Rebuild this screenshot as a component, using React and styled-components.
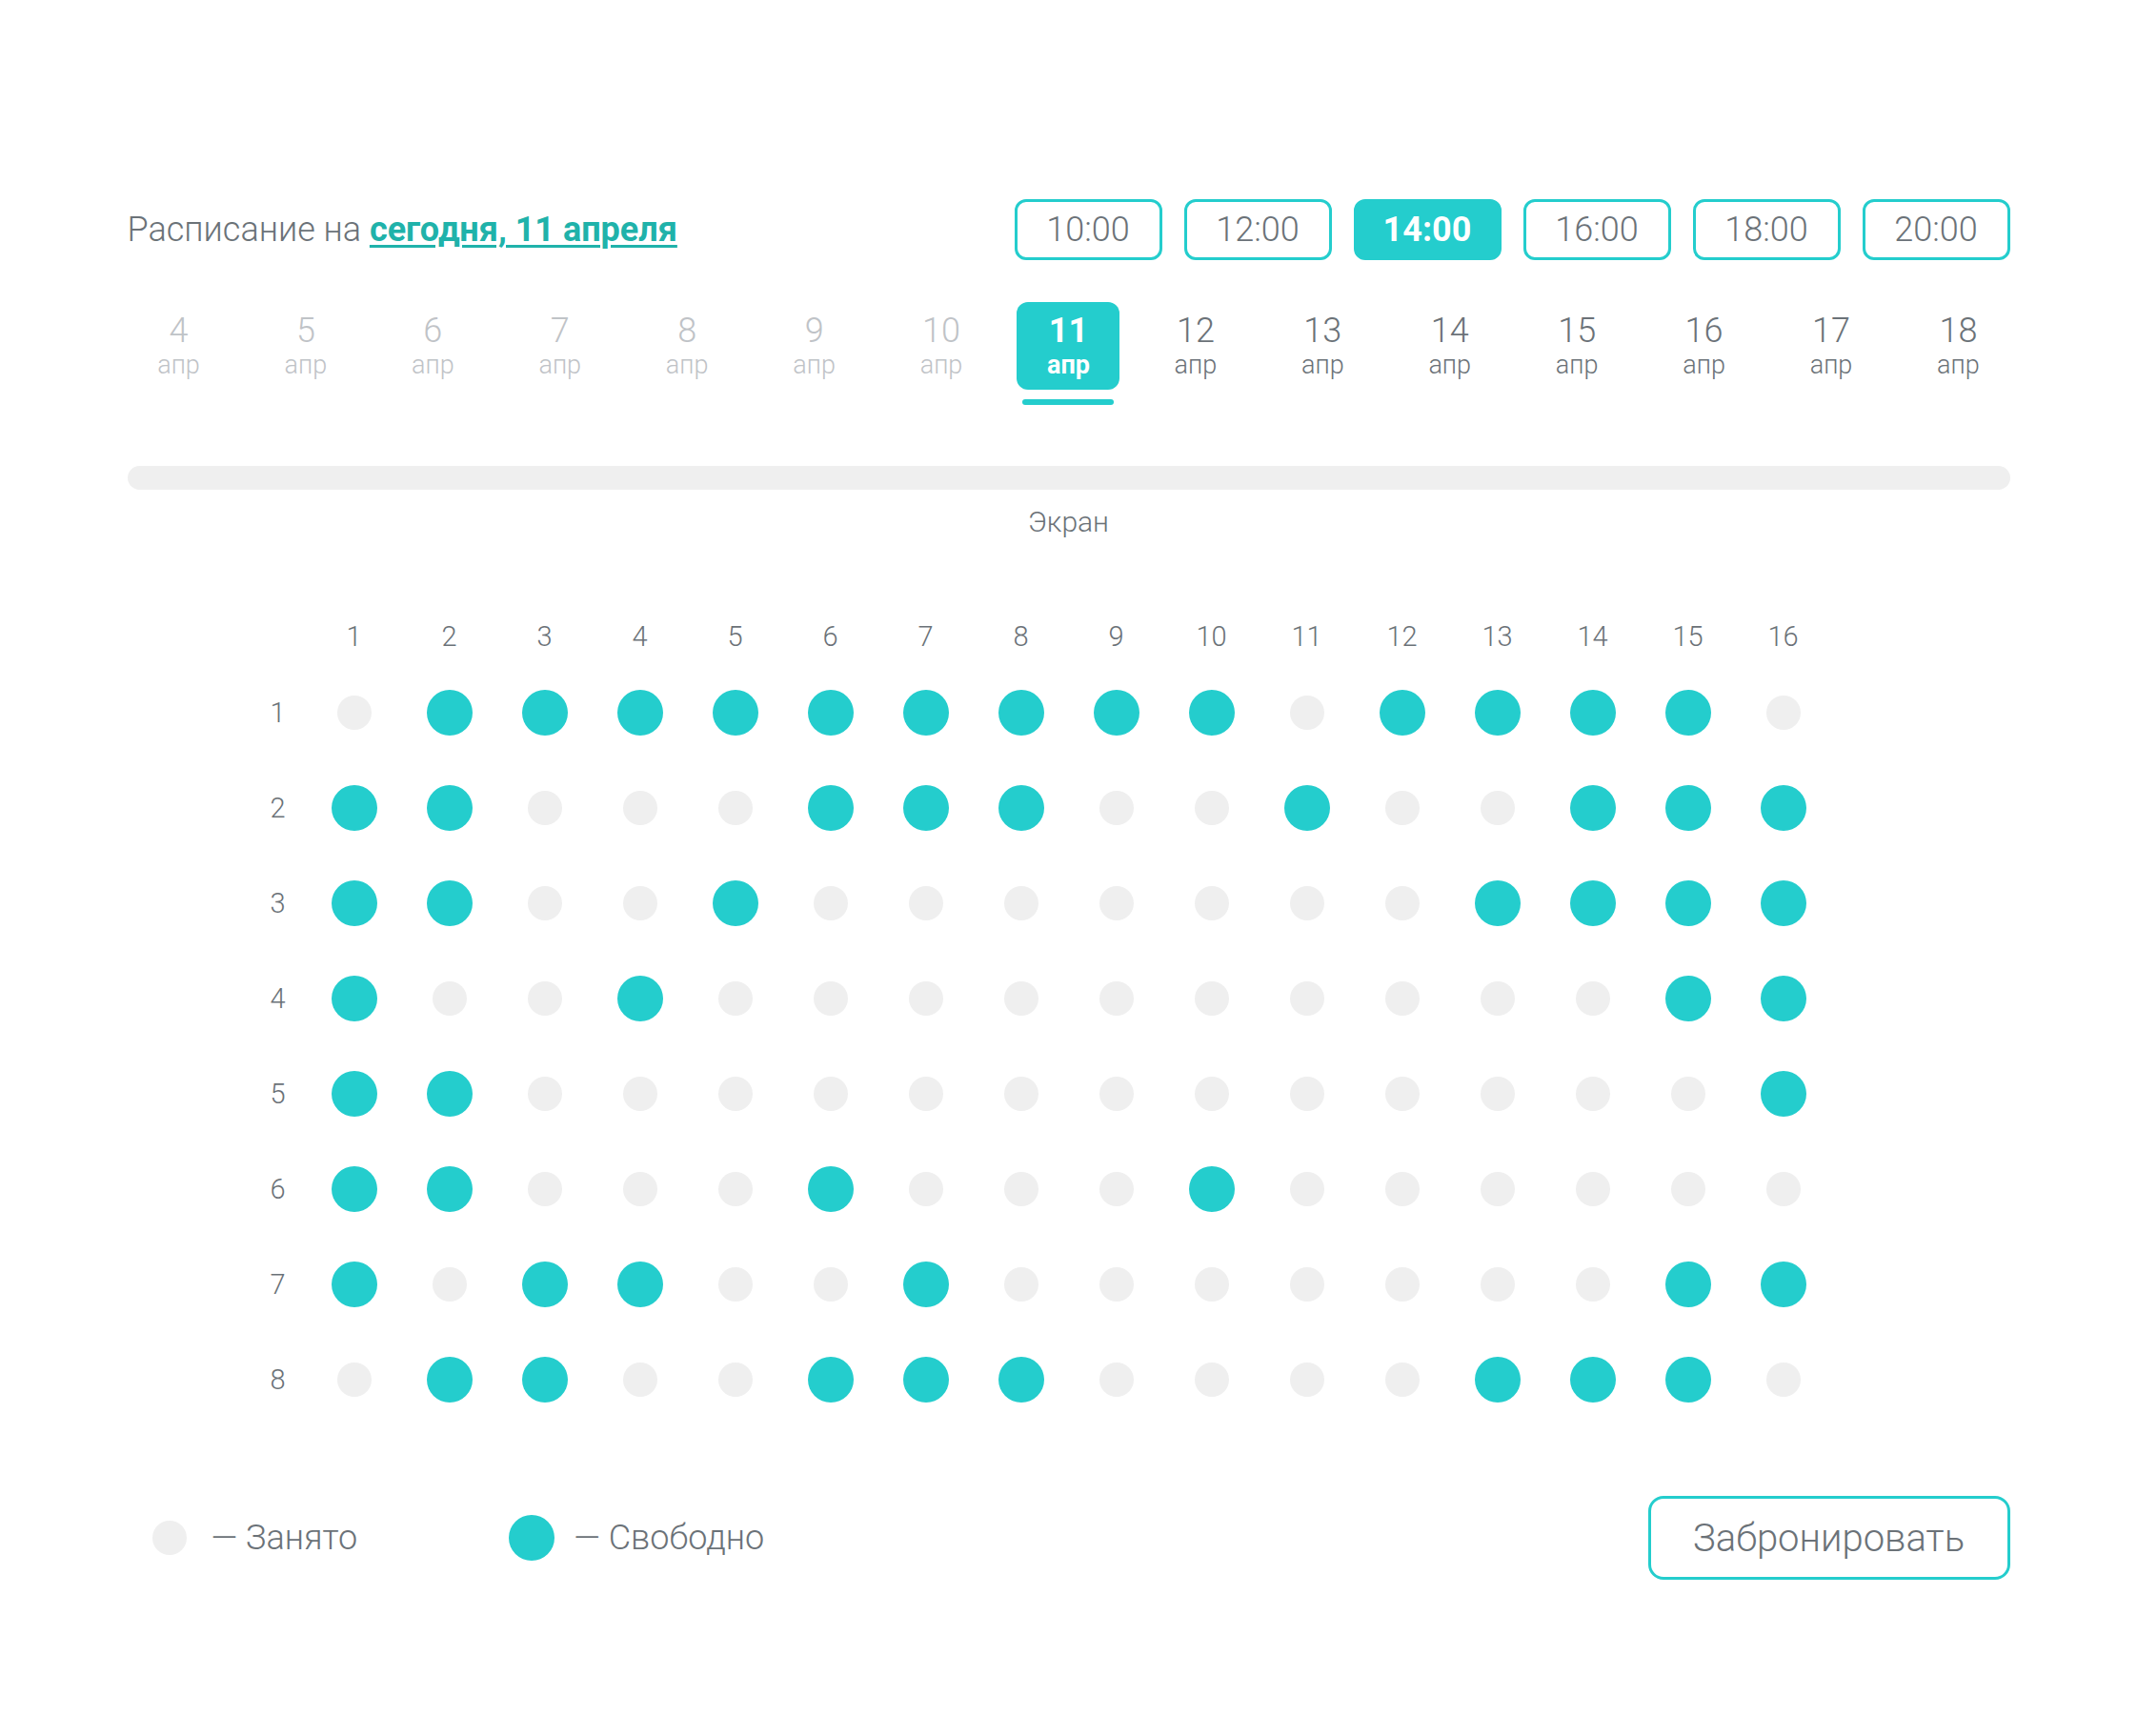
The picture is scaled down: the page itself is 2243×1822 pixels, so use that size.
import React, { useState } from "react";
import styled, { createGlobalStyle } from "styled-components";

const TEAL = "#24cdcd";
const TEXT = "#6b7278";

const GlobalStyle = createGlobalStyle`
  body {
    margin: 0;
    background: #fff;
    font-family: Roboto, "Noto Sans", "Liberation Sans", sans-serif;
    color: ${TEXT};
  }
`;

const Page = styled.div`
  padding: 209px 0 160px;
`;

const Container = styled.div`
  width: 1976px;
  margin: 0 auto;
`;

const Header = styled.div`
  display: flex;
  align-items: center;
  justify-content: space-between;
  height: 64px;
`;

const Title = styled.h1`
  margin: 0;
  font-size: 36px;
  font-weight: 300;
  color: ${TEXT};
`;

const TodayLink = styled.a`
  color: #20b2aa;
  font-weight: 700;
  text-decoration: underline;
  text-decoration-thickness: 3px;
  text-underline-offset: 4px;
  cursor: pointer;
`;

const Times = styled.div`
  display: flex;
  gap: 23px;
`;

const TimeButton = styled.button`
  box-sizing: border-box;
  width: 155px;
  height: 64px;
  border: 3px solid ${TEAL};
  border-radius: 12px;
  background: ${(p) => (p.$active ? TEAL : "#fff")};
  color: ${(p) => (p.$active ? "#fff" : TEXT)};
  font-family: inherit;
  font-size: 36px;
  font-weight: ${(p) => (p.$active ? 700 : 300)};
  cursor: pointer;
  padding: 0;
`;

const Days = styled.div`
  display: flex;
  justify-content: space-between;
  margin-top: 44px;
`;

const DayCell = styled.div`
  display: flex;
  flex-direction: column;
  align-items: center;
  width: 108px;
  cursor: pointer;
`;

const DayBox = styled.div`
  box-sizing: border-box;
  width: 108px;
  height: 92px;
  border-radius: 12px;
  display: flex;
  flex-direction: column;
  align-items: center;
  justify-content: center;
  background: ${(p) => (p.$active ? TEAL : "transparent")};
  color: ${(p) => (p.$active ? "#fff" : p.$past ? "#bfc3c7" : TEXT)};
  font-weight: ${(p) => (p.$active ? 700 : 300)};
`;

const DayNum = styled.span`
  font-size: 36px;
  line-height: 38px;
`;

const DayMonth = styled.span`
  margin-top: 3px;
  font-size: 27px;
  line-height: 29px;
`;

const DayBar = styled.div`
  width: 96px;
  height: 6px;
  margin-top: 10px;
  border-radius: 3px;
  background: ${(p) => (p.$active ? TEAL : "transparent")};
`;

const ScreenBar = styled.div`
  margin-top: 64px;
  height: 25px;
  border-radius: 13px;
  background: #efefef;
`;

const ScreenLabel = styled.div`
  margin-top: 17px;
  text-align: center;
  font-size: 30px;
  font-weight: 300;
  line-height: 34px;
`;

const Hall = styled.div`
  display: grid;
  grid-template-columns: 60px repeat(16, 100px);
  grid-template-rows: 60px repeat(8, 100px);
  width: fit-content;
  padding-right: 60px;
  margin: 73px auto 0;
`;

const Label = styled.div`
  display: flex;
  align-items: center;
  justify-content: center;
  font-size: 29px;
  font-weight: 300;
  color: ${TEXT};
`;

const SeatCell = styled.div`
  display: flex;
  align-items: center;
  justify-content: center;
`;

const Dot = styled.div`
  width: ${(p) => (p.$free ? 48 : 36)}px;
  height: ${(p) => (p.$free ? 48 : 36)}px;
  border-radius: 50%;
  background: ${(p) => (p.$free ? TEAL : "#efefef")};
  cursor: ${(p) => (p.$free ? "pointer" : "default")};
`;

const Footer = styled.div`
  display: flex;
  align-items: center;
  justify-content: space-between;
  margin-top: 72px;
`;

const Legend = styled.div`
  display: flex;
  align-items: center;
  gap: 159px;
  padding-left: 20px;
`;

const LegendItem = styled.div`
  display: flex;
  align-items: center;
  gap: 20px;
  font-size: 36px;
  font-weight: 300;
`;

const DotBox = styled.div`
  width: 48px;
  height: 48px;
  display: flex;
  align-items: center;
  justify-content: center;
`;

const BookButton = styled.button`
  box-sizing: border-box;
  width: 380px;
  height: 88px;
  border: 3px solid ${TEAL};
  border-radius: 16px;
  background: #fff;
  color: ${TEXT};
  font-family: inherit;
  font-size: 40px;
  font-weight: 300;
  cursor: pointer;
`;

const times = ["10:00", "12:00", "14:00", "16:00", "18:00", "20:00"];
const days = Array.from({ length: 15 }, (_, i) => i + 4);

// F - свободно, o - занято
const seatMap = [
  "oFFFFFFFFFoFFFFo",
  "FFoooFFFooFooFFF",
  "FFooFoooooooFFFF",
  "FooFooooooooooFF",
  "FFoooooooooooooF",
  "FFoooFoooFoooooo",
  "FoFFooFoooooooFF",
  "oFFooFFFooooFFFo",
];

export default function App() {
  const [time, setTime] = useState("14:00");
  const [day, setDay] = useState(11);

  return (
    <Page>
      <GlobalStyle />
      <Container>
        <Header>
          <Title>
            Расписание на <TodayLink>сегодня, 11 апреля</TodayLink>
          </Title>
          <Times>
            {times.map((t) => (
              <TimeButton key={t} $active={t === time} onClick={() => setTime(t)}>
                {t}
              </TimeButton>
            ))}
          </Times>
        </Header>

        <Days>
          {days.map((d) => (
            <DayCell key={d} onClick={() => setDay(d)}>
              <DayBox $active={d === day} $past={d < 11}>
                <DayNum>{d}</DayNum>
                <DayMonth>апр</DayMonth>
              </DayBox>
              <DayBar $active={d === day} />
            </DayCell>
          ))}
        </Days>

        <ScreenBar />
        <ScreenLabel>Экран</ScreenLabel>

        <Hall>
          <Label />
          {Array.from({ length: 16 }, (_, i) => (
            <Label key={"c" + i}>{i + 1}</Label>
          ))}
          {seatMap.map((row, r) => (
            <React.Fragment key={r}>
              <Label>{r + 1}</Label>
              {row.split("").map((s, c) => (
                <SeatCell key={c}>
                  <Dot $free={s === "F"} />
                </SeatCell>
              ))}
            </React.Fragment>
          ))}
        </Hall>

        <Footer>
          <Legend>
            <LegendItem>
              <DotBox>
                <Dot />
              </DotBox>
              — Занято
            </LegendItem>
            <LegendItem>
              <DotBox>
                <Dot $free />
              </DotBox>
              — Свободно
            </LegendItem>
          </Legend>
          <BookButton>Забронировать</BookButton>
        </Footer>
      </Container>
    </Page>
  );
}
